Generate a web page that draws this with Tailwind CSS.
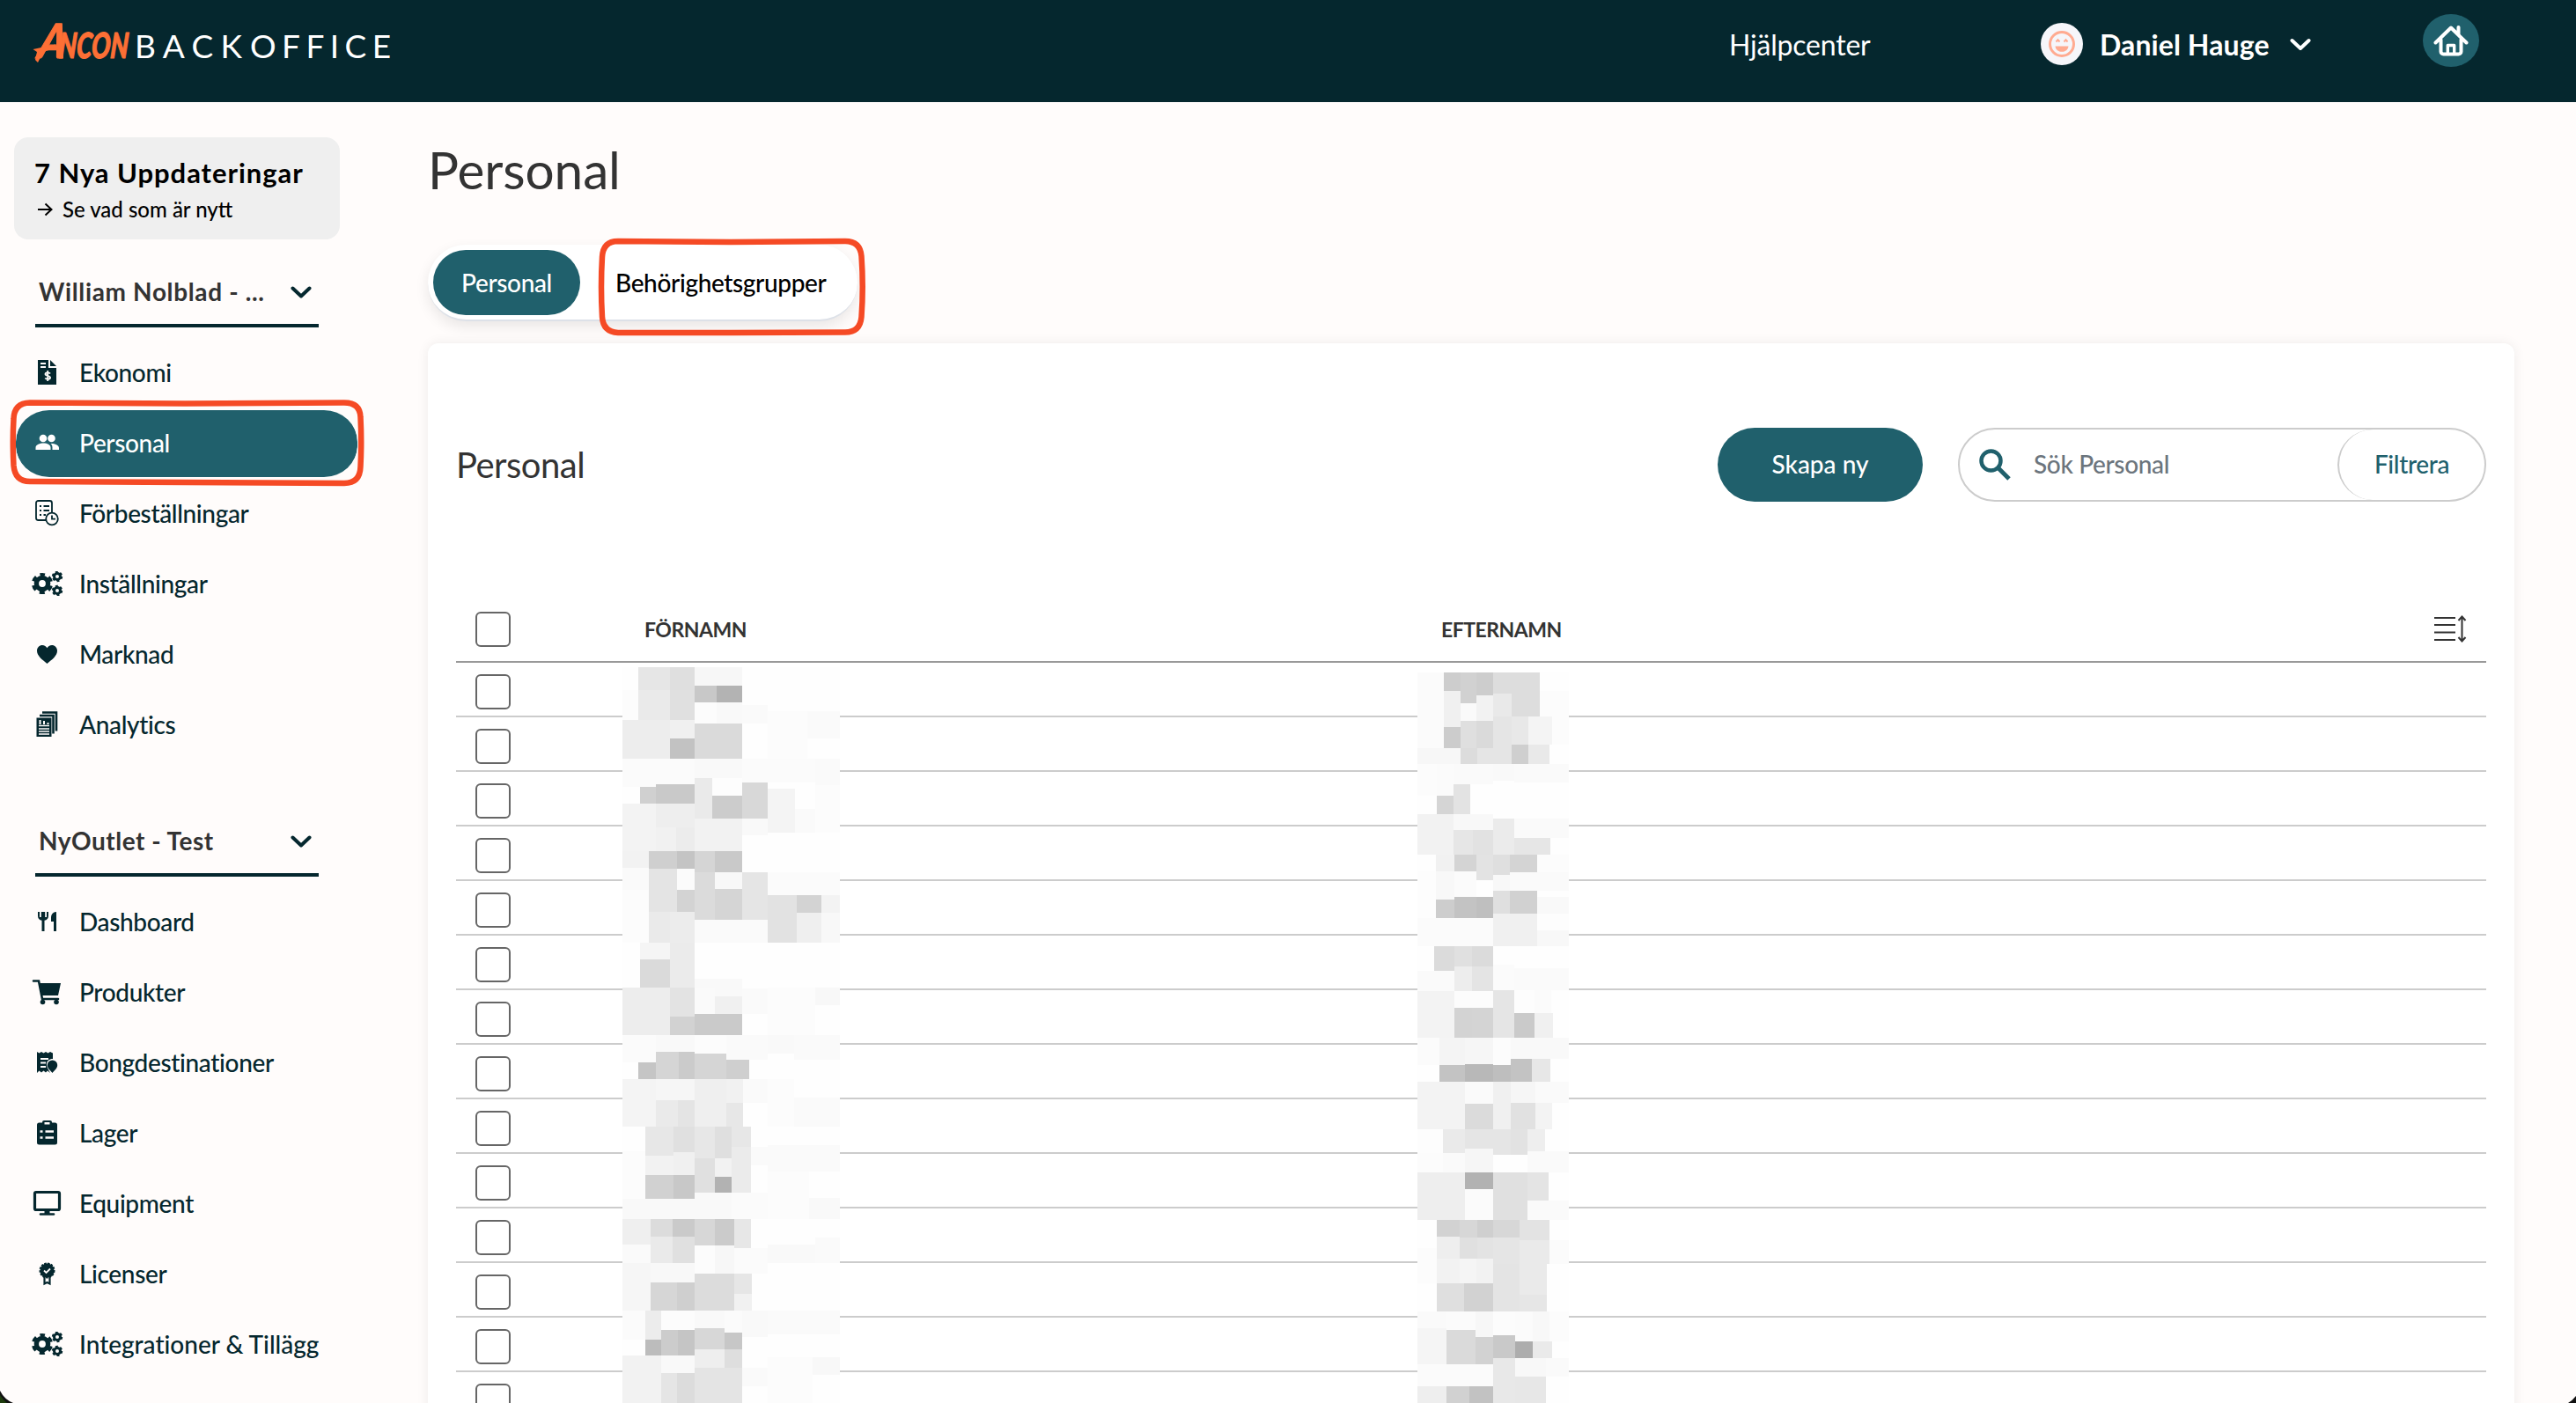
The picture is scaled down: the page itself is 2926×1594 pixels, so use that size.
<!DOCTYPE html>
<html lang="sv">
<head>
  <meta charset="UTF-8" />
  <meta name="viewport" content="width=device-width, initial-scale=1.0"/>
  <title>Ancon Backoffice - Personal</title>
  <script src="https://cdn.jsdelivr.net/npm/@tailwindcss/browser@4"></script>
</head>
<body class="relative h-[1594px] w-[2926px] overflow-hidden bg-[#fffcfb] font-['Lato',sans-serif] text-[#05272e]">

  <!-- Icons -->
  <svg class="hidden">
    <symbol id="chevron" viewBox="0 0 24 14"><path d="M2.5 2.5 12 11.5 21.5 2.5" fill="none" stroke="currentColor" stroke-width="4" stroke-linecap="round" stroke-linejoin="round"/></symbol>
    <symbol id="gears" viewBox="0 0 36 28">
      <g fill="none" stroke="currentColor">
        <circle cx="12" cy="14" r="6.6" stroke-width="5.4"/>
        <circle cx="12" cy="14" r="10.4" stroke-width="3.4" stroke-dasharray="6 4.89" stroke-dashoffset="3" transform="rotate(-90 12 14)"/>
        <circle cx="29" cy="6" r="3.5" stroke-width="3"/>
        <circle cx="29" cy="6" r="5.2" stroke-width="2" stroke-dasharray="2.9 2.545"/>
        <circle cx="29" cy="22" r="3.5" stroke-width="3"/>
        <circle cx="29" cy="22" r="5.2" stroke-width="2" stroke-dasharray="2.9 2.545"/>
      </g>
    </symbol>
  </svg>

  <header class="flex h-[116px] bg-[#05272e] text-white">
    <div class="flex w-[1964px] pl-[30px] pt-[8px]">
      <svg class="h-[92px] w-[440px] overflow-visible" viewBox="30 8 440 92">
        <g font-family="Lato" font-weight="900" font-style="italic" fill="#fd6f35" stroke="#fd6f35" stroke-width="1.2" stroke-linejoin="round">
          <text transform="translate(42 66) skewX(-10)" font-size="54" textLength="31" lengthAdjust="spacingAndGlyphs">A</text>
          <text transform="translate(66 66) skewX(-4)" font-size="40" textLength="79" lengthAdjust="spacingAndGlyphs">NCON</text>
        </g>
        <path d="M37.500 56 63 50.500 62 55 49 59 43 71 40 68 42 59Z" fill="#fd6f35"/>
        <text x="153" y="66" font-family="Lato" font-size="37" fill="#fff" textLength="122">BACK</text>
        <text x="284" y="66" font-family="Lato" font-size="37" fill="#fff" textLength="160">OFFICE</text>
      </svg>
    </div>
    <a class="w-[354px] pt-[31px] text-[32px] leading-10 tracking-[-0.2px]">Hjälpcenter</a>
    <div class="flex w-[434px] pt-[26px]">
      <svg class="size-12" viewBox="0 0 48 48">
        <circle cx="24" cy="24" r="24" fill="#f6f6fa"/>
        <circle cx="24" cy="24" r="13.500" fill="none" stroke="#ffab91" stroke-width="3"/>
        <path d="M16.500 26.500h15c-.5 4-3.500 6.300-7.500 6.300s-7-2.300-7.500-6.300Z" fill="#ffab91"/>
        <path d="m17.500 21.500 2-2.300 2 2.300m5 0 2-2.300 2 2.300" fill="none" stroke="#ffab91" stroke-width="2"/>
      </svg>
      <span class="ml-[19px] mt-[5px] w-[216px] text-[32px] font-bold leading-10 tracking-[0.1px]">Daniel Hauge</span>
      <svg class="mt-[17px] h-[15px] w-[24px]"><use href="#chevron"/></svg>
    </div>
    <div class="mt-4 flex h-[60px] w-[64px] items-center justify-center rounded-[50%] bg-[#20606c]">
      <svg class="size-10" viewBox="0 0 40 40" fill="none" stroke="#fff" stroke-width="4" stroke-linecap="round" stroke-linejoin="round">
        <path d="M2.500 22.500 20 5.500l17.500 17M28.500 5v8M8.500 19v13.500a3 3 0 0 0 3 3h17a3 3 0 0 0 3-3V19"/>
        <path d="M16.300 35v-9.500h7.400V35" stroke-width="3.400"/>
      </svg>
    </div>
  </header>

  <div class="flex">
    <aside class="w-[486px] shrink-0">
      <div class="ml-4 mt-10 h-[116px] w-[370px] rounded-2xl bg-[#efefef] pl-[23px] pt-[20px] text-black">
        <div class="text-[31px] font-bold leading-[40px] tracking-[0.95px]">7 Nya Uppdateringar</div>
        <div class="flex items-center pl-1 text-[24px] font-medium leading-[44px]">
          <svg class="mr-[11px] h-4 w-[17px]" viewBox="0 0 17 16" fill="none" stroke="#000" stroke-width="2"><path d="M0 8h15M8.500 1.500 15.500 8l-7 6.500"/></svg>
          Se vad som är nytt
        </div>
      </div>

      <div class="ml-10 mt-8 flex h-[68px] w-[322px] items-center justify-between border-b-4 border-[#05272e] pl-1 pr-2 text-[28px] font-bold tracking-[0.65px] text-[#333]">
        <span class="-mt-[10px]">William Nolblad - ...</span>
        <svg class="-mt-2 h-[14px] w-6 text-[#05272e]"><use href="#chevron"/></svg>
      </div>
      <nav class="mt-3 text-[28px] font-medium tracking-[-0.35px] [&>a]:flex [&>a]:h-20 [&>a]:items-center [&>a]:pb-[2px] [&_svg]:mr-[18px] [&_svg]:h-8 [&_svg]:w-9">
        <a class="pl-9"><svg viewBox="0 0 36 32" fill="currentColor"><path fill-rule="evenodd" d="M9 2h10v9h9v19H7V2Zm1 3v2h6V5Zm0 4v2h6V9Z"/><path d="m21 2 7 7h-7Z"/><path d="M21 17.500c-1-1.500-5.500-1.700-5.500.6 0 2.600 5.600 1.400 5.600 4 0 2.300-4.600 2.200-5.800.4M18.200 14v12" fill="none" stroke="#fffcfb" stroke-width="1.800"/></svg>Ekonomi</a>
        <a class="ml-[18px] w-[388px] rounded-[38px] border-y-2 border-transparent bg-[#20606c] bg-clip-padding pl-[18px] text-white"><svg viewBox="0 0 36 32" fill="currentColor"><circle cx="13" cy="11" r="4.300"/><circle cx="22.500" cy="11" r="4.300"/><path d="M4.500 24v-2.500c0-3.500 5-5 9-5s8 1.500 8 5V24ZM23.500 24v-2.800c0-1.800-.8-3.200-2-4.200 4-.3 9.500 1.500 9.500 4.700V24Z"/></svg>Personal</a>
        <a class="pl-9"><svg viewBox="0 0 36 32" fill="none" stroke="currentColor" stroke-width="1.800"><path d="M17 24H7.500A2.500 2.500 0 0 1 5 21.500v-17A2.500 2.500 0 0 1 7.500 2h13A2.500 2.500 0 0 1 23 4.500V15"/><path d="M9 8h2m2.500 0H20M9 13h2m2.500 0H20M9 18h2m2.500 0H16"/><circle cx="23" cy="22.500" r="6.800"/><path d="M23 18.500v4.200h4"/></svg>Förbeställningar</a>
        <a class="pl-9"><svg viewBox="0 0 36 28"><use href="#gears"/></svg>Inställningar</a>
        <a class="pl-9"><svg viewBox="0 0 36 32" fill="currentColor"><path d="M17.500 27C12 22.500 6 18 6 12.500 6 8.500 9 6 12 6c2.500 0 4.500 1.300 5.500 3.200C18.500 7.300 20.500 6 23 6c3 0 6 2.500 6 6.500C29 18 23 22.500 17.500 27Z"/></svg>Marknad</a>
        <a class="pl-9"><svg viewBox="0 0 36 32" fill="none" stroke="currentColor"><path d="M12 2.500h16v21" stroke-width="2.600"/><path d="M9 6h15.500v20.500" stroke-width="2.600"/><path d="M5.500 8.500h17V30h-17Z" fill="currentColor" stroke="none"/><path d="M8 17.500h12M8 21h12M8 24h12M8 27h12" stroke="#fffcfb" stroke-width="1.300"/><path d="M9.500 16v-5m4.500 5v-4m4.500 4v-2" stroke="#fffcfb" stroke-width="2"/></svg>Analytics</a>
      </nav>

      <div class="ml-10 mt-[64px] flex h-[68px] w-[322px] items-center justify-between border-b-4 border-[#05272e] pl-1 pr-2 text-[28px] font-bold tracking-[0.5px] text-[#333]">
        <span class="-mt-[10px]">NyOutlet - Test</span>
        <svg class="-mt-2 h-[14px] w-6 text-[#05272e]"><use href="#chevron"/></svg>
      </div>
      <nav class="mt-3 text-[28px] font-medium tracking-[-0.35px] [&>a]:flex [&>a]:h-20 [&>a]:items-center [&>a]:pb-[2px] [&_svg]:mr-[18px] [&_svg]:h-8 [&_svg]:w-9">
        <a class="pl-9"><svg viewBox="0 0 36 32" fill="currentColor"><path d="M7 5v4.500a5.500 5.500 0 0 0 4.500 5.300V27h3V14.800A5.500 5.500 0 0 0 19 9.500V5h-2v6h-1.800V5h-4.400v6H9V5ZM28 5c-4 0-6 3-6 6.500V16h3v11h3Z"/><path d="M13 5v6" stroke="currentColor" stroke-width="1.500"/></svg>Dashboard</a>
        <a class="pl-9"><svg viewBox="0 0 36 32" fill="currentColor"><path d="M2 3.500h6L12 24h18" fill="none" stroke="currentColor" stroke-width="2.600" stroke-linecap="round"/><path d="M8 6h25l-3 14H11Z"/><circle cx="12.500" cy="27.500" r="2.800"/><circle cx="28" cy="27.500" r="2.800"/></svg>Produkter</a>
        <a class="pl-9"><svg viewBox="0 0 36 32" fill="currentColor"><path d="m6 4 2.500 1.500L11 4l2.500 1.500L16 4l2.500 1.500L21 4l3 1.500V12c-4 0-7 2.500-7 6 0 4 2 6 4 10l-3-2.500-2 2-2.500-2-2.500 2-2.500-2L6 28Z"/><path d="M10 12h9M10 16.500h6M10 21h6" stroke="#fffcfb" stroke-width="1.800"/><path d="M23.500 13.500a5.700 5.700 0 0 1 5.700 5.500c0 4-3.700 6.500-5.700 9-2-2.500-5.700-5-5.700-9a5.700 5.700 0 0 1 5.700-5.500Z"/></svg>Bongdestinationer</a>
        <a class="pl-9"><svg viewBox="0 0 36 32" fill="currentColor"><path fill-rule="evenodd" d="M12 4.500V4a2 2 0 0 1 2-2h7a2 2 0 0 1 2 2v.5h3.500A2.500 2.500 0 0 1 29 7v20a2.500 2.500 0 0 1-2.500 2.500h-18A2.500 2.500 0 0 1 6 27V7a2.500 2.500 0 0 1 2.500-2.500ZM14.500 4v2.500h6V4Z"/><path d="M9.500 14.500h3m3 0h9.500m-15.500 7h3m3 0h9.500" stroke="#fffcfb" stroke-width="2.500"/></svg>Lager</a>
        <a class="pl-9"><svg viewBox="0 0 36 32" fill="none" stroke="currentColor"><rect x="3.500" y="3.500" width="28" height="20" rx="1.500" stroke-width="3.200"/><path d="M10 28.500h15" stroke-width="2.600" stroke-linecap="round"/><path d="M17.500 24v4" stroke-width="6"/></svg>Equipment</a>
        <a class="pl-9"><svg viewBox="0 0 36 32" fill="currentColor"><circle cx="17.500" cy="12.500" r="8" stroke="currentColor" stroke-width="2" stroke-dasharray="2.500 1.300"/><path d="M14.500 19v8.500l3-1.500 3 1.500V19" fill="none" stroke="currentColor" stroke-width="2.200"/><path d="m14 12.500 2.500 2.500 4.500-4.500" fill="none" stroke="#fffcfb" stroke-width="1.800"/></svg>Licenser</a>
        <a class="pl-9 tracking-[-0.02px]"><svg viewBox="0 0 36 28"><use href="#gears"/></svg>Integrationer &amp; Tillägg</a>
      </nav>
    </aside>

    <main class="w-[2370px] pt-[42px]">
      <h1 class="h-[120px] text-[58.5px] leading-[68px] tracking-[-0.1px] text-[#333]">Personal</h1>
      <div class="flex h-[87px] w-[488px] items-center rounded-[44px] border-b-2 border-[#dde1e8] bg-white pl-[6px] text-[28px] font-medium tracking-[-0.35px] shadow-[0_6px_16px_rgba(0,0,0,0.09)]">
        <span class="flex h-[74px] w-[167px] items-center justify-center rounded-[37px] bg-[#20606c] text-white">Personal</span>
        <span class="ml-[40px] text-black">Behörighetsgrupper</span>
      </div>

      <section class="mt-[25px] h-[1250px] rounded-[12px] bg-white px-8 shadow-[0_0_14px_rgba(0,0,0,0.07)]">
        <div class="flex h-[276px] items-center">
          <h2 class="flex-1 text-[40px] tracking-[-0.5px] text-[#333]">Personal</h2>
          <button class="mr-10 h-[84px] w-[233px] rounded-[42px] bg-[#20606c] pb-[2px] text-[28px] font-medium text-white">Skapa ny</button>
          <div class="flex h-[84px] w-[600px] items-center rounded-[42px] border-2 border-[#ccc] pl-[22px] text-[28px] font-medium tracking-[-0.35px]">
            <svg class="size-[36px]" viewBox="0 0 36 36" fill="none" stroke="#20606c" stroke-width="4.500"><circle cx="13.500" cy="13.500" r="11"/><path d="m22 22 12 12" stroke-width="5"/></svg>
            <span class="-mt-[2px] ml-[26px] flex-1 text-[#6c757d]">Sök Personal</span>
            <span class="flex h-[80px] w-[167px] items-center justify-center rounded-[40px] border-l-2 border-[#ccc] pb-[2px] text-[#20606c]">Filtrera</span>
          </div>
        </div>
        <div class="relative mt-5 text-[23px] font-bold tracking-[-0.5px] text-[#333]">
          <div class="flex h-[67px] items-center border-b-2 border-[#999] pl-[22px]">
            <i class="-mt-[7px] box-border size-10 rounded-md border-2 border-[#666]"></i>
            <span class="-mt-[7px] ml-[152px] w-[905px]">FÖRNAMN</span>
            <span class="-mt-[7px] flex-1">EFTERNAMN</span>
            <svg class="-mt-[10px] mr-[22px] h-[32px] w-[37px]" viewBox="0 0 37 32" fill="none" stroke="#333" stroke-width="2"><path d="M0 4h24M0 12h24M0 20.500h24M0 29h24M31.500 3v27M27.500 7l4-4.500 4 4.500M27.500 26l4 4.500 4-4.500"/></svg>
          </div>
          <div id="rows"></div>
          <svg class="absolute left-[189px] top-[72px] h-[836px] w-[247px]" viewBox="621 264 741 2508" id="first-names" shape-rendering="crispEdges"></svg>
          <svg class="absolute left-[1092px] top-[78px] h-[830px] w-[172px]" viewBox="150 282 516 2490" id="last-names" shape-rendering="crispEdges"></svg>
        </div>
      </section>
    </main>
  </div>

  <!-- Marked areas -->
  <svg class="absolute left-0 top-0 h-[600px] w-[1000px]" viewBox="0 0 1000 600" fill="none" stroke="#f54a25" stroke-width="6.500">
    <path d="M34 457.500 210 458.500 390 457.500Q409 457 409.500 474 411 502 409.500 530 409 549 391 549L210 548 34 547Q17 547 15.500 529 14 502 15.500 476 16 458 34 457.500Z"/>
    <path d="M702 274 830 275 960 274Q977 274 978.500 291 981 326 978.500 360 977 377.500 960 377.500L830 378 702 378Q685 377 684 360 682 326 684 292 685 274 702 274Z"/>
  </svg>

  <!-- Window corners -->
  <svg class="absolute bottom-0 left-0 h-[18px] w-[18px]" viewBox="0 0 18 18"><path d="M0 4Q5 14 15 18H0Z" fill="#111"/><path d="M0 9Q3 14 8 18H0Z" fill="#1d3b0c"/></svg>
  <svg class="absolute bottom-0 right-0 h-[18px] w-[18px]" viewBox="0 0 18 18"><path d="M18 10Q14 15 9 18H18Z" fill="#111"/></svg>

  <script>
    const rows = document.getElementById('rows');
    for (let i = 0; i < 14; i++) {
      rows.innerHTML += '<div class="h-[62px] border-b-2 border-[#ccc] pl-[22px] pt-[13px]"><i class="block size-10 rounded-md border-2 border-[#666]"></i></div>';
    }

    // Masked names: x1, y1, x2, y2, shade
    const firstTop = `621 264 1362 1360 fe
675 264 783 342 e6|783 264 867 342 df|867 264 1029 327 f7|867 327 942 384 c8|942 327 1029 384 b3
621 342 675 444 fc|675 342 783 444 ea|783 342 867 444 e0|867 384 942 456 fc|942 384 1029 456 f9|1029 393 1116 456 fa
1116 415 1250 576 fc|1250 415 1362 507 fa|621 444 783 576 ed|783 444 867 507 f0|783 507 867 576 c2|867 456 1029 576 da
621 576 867 672 fb|867 576 1029 642 f9|1029 576 1278 657 fb|1278 576 1362 665 fa|621 672 681 729 fe|681 672 735 729 d0|735 663 867 729 c9
867 642 927 780 ea|927 642 1029 702 fd|927 702 1029 780 cc|1029 657 1116 780 d8|1116 678 1209 828 f4|1209 747 1278 828 fa|1278 665 1362 828 fc
621 729 735 891 f3|735 729 867 810 ee|735 810 804 891 f1|804 810 867 891 ec|867 780 1029 891 f2|1029 780 1116 837 f9
621 891 711 948 f2|711 891 807 951 cf|807 891 867 951 c4|867 891 936 963 d5|936 891 1029 963 c9
621 948 711 1023 fa|621 1023 711 1203 fc|711 951 807 1098 e4|807 951 867 1023 fb|807 1023 867 1098 d3|867 963 936 1125 db|936 963 1029 1020 f8|936 1020 1029 1125 d5|1029 963 1116 1125 e5|1116 963 1362 1041 fb
1116 1041 1215 1203 e2|1215 1041 1299 1101 d3|1299 1041 1362 1101 f3|1215 1101 1299 1203 ef|1299 1101 1362 1203 f8|711 1098 783 1203 ea|783 1098 867 1203 ec|867 1125 1116 1203 fa
681 1203 783 1260 f5|783 1203 867 1356 eb|681 1260 783 1356 da|867 1326 1029 1386 f9`;
    const firstBottom = `621 6 1362 1422 fe
621 6 783 168 ed|783 6 867 105 e3|783 105 867 168 d2|867 6 936 96 fa|936 0 1029 36 f9|936 36 1029 96 f0|867 96 1029 168 ca|1029 9 1116 96 fa|1116 6 1278 168 fc|1278 6 1362 66 f8
621 168 735 261 fb|735 168 867 225 f9|867 168 975 231 fc|975 168 1116 252 fa|1116 168 1206 231 f9|1206 168 1362 252 fa|675 261 735 318 c5|735 225 813 318 d5|813 225 867 318 cb|867 231 975 318 d5|975 252 1053 318 cf
621 318 735 480 f4|735 318 867 390 f6|735 390 810 480 ea|810 390 867 480 e4|867 318 975 480 ef|975 318 1032 399 f1|975 399 1032 480 e7|1032 318 1116 399 fa|1116 318 1206 480 fc|1206 381 1362 480 fa
699 480 795 579 e7|795 480 867 567 e0|867 480 936 588 e7|936 480 993 588 df|993 480 1059 549 e7|621 564 699 726 fc|699 579 795 645 f2|795 567 867 645 f0|699 645 795 726 d1|795 645 867 726 c8|867 588 936 705 e0|936 588 993 651 f2|936 651 993 705 b2|993 549 1059 705 eb|1059 549 1116 612 fa|1116 543 1362 633 fa|1116 633 1257 795 fc
621 726 867 795 f9|867 705 993 795 f9|993 705 1116 795 fb|1257 723 1362 795 f9|621 795 717 882 ef|717 795 792 855 dc|792 795 867 855 ca|867 795 936 885 d7|936 795 1002 885 cb|1002 795 1059 894 e7
621 882 717 945 fa|717 855 792 945 ea|792 855 867 945 e0|867 885 936 981 fc|936 885 1002 981 f7|1002 894 1116 981 fb|1116 882 1278 945 f9|1278 858 1362 945 fa
621 945 717 1107 f6|717 945 867 1011 f8|717 1011 807 1107 d6|807 1011 867 1107 cf|867 981 1002 1107 dc|1002 981 1062 1050 e6|1002 1050 1062 1107 f1
621 1107 699 1206 fb|699 1107 753 1206 ec|753 1107 867 1173 fc|867 1107 969 1167 f9|969 1107 1029 1182 fb|1029 1107 1116 1197 f9|1116 1107 1362 1188 fa|699 1206 753 1260 bc|753 1173 810 1260 cc|810 1173 867 1260 c5|867 1167 969 1239 d7|969 1182 1029 1239 c7
621 1260 753 1422 f2|753 1260 867 1320 f9|867 1239 969 1302 ee|969 1239 1029 1302 de|753 1320 807 1422 e5|807 1320 867 1422 dc|867 1302 1029 1422 e4|1029 1302 1116 1365 fa|1116 1266 1269 1422 fc|1269 1266 1362 1326 f8`;
    const lastTop = `150 282 666 1370 fe
150 282 240 468 fb|240 282 297 345 cd|297 282 351 387 d1|351 282 408 360 cd|408 282 567 354 dd|240 345 297 468 f0|297 387 351 447 fa|351 360 408 447 f2|408 354 471 432 e9|471 345 567 432 dd|567 345 666 528 fc
150 468 240 540 fb|240 468 297 540 cc|297 447 351 540 df|351 447 408 540 da|408 432 471 594 e5|471 432 528 528 e8|528 432 609 528 f4|471 528 528 594 cf|528 528 600 594 e9|150 540 297 594 f7|297 540 354 594 dc|354 540 408 594 e5
150 594 216 702 fc|216 594 273 702 fb|273 594 408 663 fa|408 594 480 651 f9|480 594 666 657 fa|216 702 273 765 d5|273 663 330 765 e3
150 765 273 903 f2|273 765 408 819 f8|273 819 339 903 e6|339 819 408 903 e2|408 780 480 903 eb|480 780 666 846 fa|480 846 603 903 e6
213 903 276 960 f1|276 903 351 960 d4|351 903 408 990 e3|408 903 465 972 df|465 903 558 963 d4|558 903 666 984 fc
150 960 213 1119 fd|213 960 276 1056 f8|276 960 351 1047 fb|408 972 465 1026 f8|465 963 666 1026 fa|213 1056 276 1119 cd|276 1047 351 1119 c3|351 1047 408 1119 bf|408 1026 465 1104 df|465 1026 558 1104 d1|558 1047 666 1104 f9
150 1119 408 1215 fb|408 1104 558 1215 f0|558 1104 666 1161 fd|558 1161 666 1215 f8|207 1215 276 1299 db|276 1215 336 1284 e0|336 1215 408 1284 db|150 1299 276 1368 fa|276 1284 336 1368 ed|336 1284 408 1368 e4|408 1278 480 1365 fb|480 1290 666 1365 fa`;
    const lastBottom = `150 18 666 1422 fe
150 18 276 177 f3|276 18 408 75 fc|276 75 336 177 d3|336 75 408 177 d4|408 15 480 177 e5|480 15 549 93 fd|549 15 606 93 fb|480 93 549 177 ca|549 93 612 177 f0
150 177 225 270 fb|225 177 312 270 f4|312 177 408 267 f6|408 177 468 270 fc|468 177 666 249 f9|225 270 312 327 c3|312 267 408 327 b8|408 270 468 327 be|468 249 540 327 c3|540 249 603 327 e7
150 327 312 489 f3|312 327 408 402 fa|312 402 408 489 db|408 327 468 489 f0|468 327 552 399 f6|552 327 666 399 fa|468 399 552 489 e1|552 399 609 489 f3
150 489 237 570 fd|237 489 312 570 ea|312 489 408 555 e5|408 489 468 576 e5|468 489 525 576 e2|525 489 585 564 ee|150 570 237 636 fc|237 570 312 636 fa|312 555 408 636 f6|525 564 666 636 fa
150 636 312 798 ee|312 636 408 693 b2|312 693 408 798 fb|408 636 525 798 e0|525 636 597 732 e4|525 732 666 798 fa
216 798 294 855 d2|294 798 354 858 d7|354 798 408 858 cf|408 798 498 858 d7|498 798 600 867 e3|216 855 294 930 ee|294 858 354 930 e0|354 858 408 930 e3|408 858 498 948 e5|498 867 600 948 ea|600 867 666 948 fb|150 894 216 1014 fc
216 930 294 1014 f2|294 930 351 1014 f5|351 930 408 1014 f2|408 948 498 1110 e4|498 948 591 1053 ea|216 1014 309 1110 df|309 1014 408 1110 d2|498 1053 591 1110 e6
150 1110 249 1167 fa|249 1110 348 1173 fb|348 1110 408 1197 f7|408 1110 483 1191 fc|483 1110 543 1212 fb|543 1110 600 1212 f8|600 1110 666 1212 fc
150 1167 249 1290 f5|249 1173 348 1293 da|348 1197 408 1293 d2|408 1191 483 1269 c9|483 1212 543 1269 ad|543 1212 609 1269 ea
150 1290 408 1365 fb|408 1269 483 1422 e8|483 1269 588 1332 f8|588 1269 666 1332 fa|483 1332 588 1422 e7|150 1365 249 1422 ee|249 1365 327 1422 d1|327 1365 408 1422 c2`;

    function drawMask(id, top, bottom) {
      let out = '';
      [[top, 0], [bottom, 1350]].forEach(function ([data, dy]) {
        data.split(/[|\n]/).forEach(function (cell) {
          const [x1, y1, x2, y2, c] = cell.trim().split(' ');
          out += `<rect x="${x1}" y="${+y1 + dy}" width="${x2 - x1}" height="${y2 - y1}" fill="#${c}${c}${c}"/>`;
        });
      });
      document.getElementById(id).innerHTML = out;
    }
    drawMask('first-names', firstTop, firstBottom);
    drawMask('last-names', lastTop, lastBottom);
  </script>
</body>
</html>
